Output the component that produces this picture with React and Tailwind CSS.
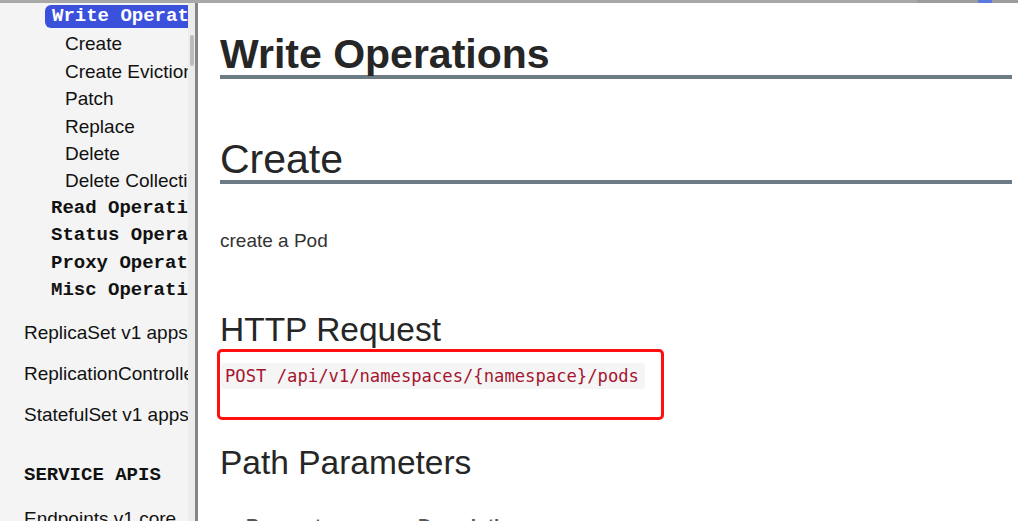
const SANS = "font-['Liberation_Sans','Helvetica',Arial,sans-serif]";
const MONO = "font-['Liberation_Mono','Courier_New',monospace]";

const subItems = ['Create', 'Create Eviction', 'Patch', 'Replace', 'Delete', 'Delete Collection'];
const groups = ['Read Operations', 'Status Operations', 'Proxy Operations', 'Misc Operations'];
const resources = ['ReplicaSet v1 apps', 'ReplicationController v1 core', 'StatefulSet v1 apps'];

function Sidebar() {
  return (
    <aside className="w-[195px] shrink-0 bg-[#f4f4f4] flex">
      <div className="w-[188px] overflow-hidden whitespace-nowrap text-[19px] text-[#111]">
        {/* Active group */}
        <div className="h-[27.4px] flex items-center pl-[45px]">
          <span className={`${MONO} flex-1 h-[23px] flex items-center pl-[7px] rounded-l-[6px] bg-[#3b51dc] text-white font-bold`}>
            Write Operations
          </span>
        </div>
        {subItems.map((s) => (
          <div key={s} className={`${SANS} pl-[65px] leading-[27.4px]`}>{s}</div>
        ))}
        {groups.map((g) => (
          <div key={g} className={`${MONO} pl-[51px] leading-[27.4px] font-bold`}>{g}</div>
        ))}

        <div className="mt-[7.2px]">
          {resources.map((r) => (
            <div key={r} className={`${SANS} pl-[24px] leading-[41px]`}>{r}</div>
          ))}
        </div>

        <div className={`${MONO} mt-[20.8px] pl-[24px] leading-[41px] font-bold`}>SERVICE APIS</div>
        <div className={`${SANS} mt-[1.8px] pl-[24px] leading-[41px]`}>Endpoints v1 core</div>
      </div>
      {/* scrollbar */}
      <div className="w-[7px] bg-[#ececec]">
        <div className="mt-[32px] ml-[2px] h-[31px] w-[4px] rounded-full bg-[#bcbcbc]" />
      </div>
    </aside>
  );
}

function Main() {
  return (
    <main className={`${SANS} flex-1 bg-white pl-[22px] pr-[6px] text-[#262626] overflow-hidden`}>
      <h1 className="mt-[31.3px] text-[41px] leading-none font-bold border-b-4 border-[#6d7c84]">
        Write Operations
      </h1>
      <h1 className="mt-[59.5px] text-[41px] leading-none font-normal border-b-4 border-[#6d7c84]">
        Create
      </h1>
      <p className="mt-[47.3px] text-[19px] leading-[19px] text-[#333]">create a Pod</p>

      <h2 className="mt-[62.7px] text-[33.5px] leading-[33.5px]">HTTP Request</h2>
      <div className="mt-[2.5px] -ml-[3.3px] w-[447px] h-[71px] border-[3px] border-[#ff1010] rounded-[5px] pt-[11.4px] pl-[1.3px]">
        <code className="font-['DejaVu_Sans_Mono',monospace] inline-block text-[17.2px] leading-[26px] bg-[#f5f5f5] rounded-[3px] pl-[4px] pr-[6px] text-[#a5152f]">
          POST /api/v1/namespaces/{'{namespace}'}/pods
        </code>
      </div>

      <h2 className="mt-[25.9px] text-[33.5px] leading-[33.5px]">Path Parameters</h2>

      <div className="mt-[36.5px] flex text-[19px] leading-[19px] font-bold text-[#555]">
        <span className="pl-[26px] w-[198px]">Parameter</span>
        <span>Description</span>
      </div>
    </main>
  );
}

export default function App() {
  return (
    <div className="w-[1018px] h-[521px] overflow-hidden flex flex-col bg-white">
      <div className="h-[3px] shrink-0 flex">
        <div className="flex-1 bg-[#a8a8a8]" />
        <div className="w-[61px] bg-[#9c9c9c]" />
        <div className="w-[14px] bg-[#5b7ae0]" />
        <div className="w-[26px] bg-[#9c9c9c]" />
      </div>
      <div className="flex flex-1 min-h-0">
        <Sidebar />
        <div className="w-[3px] shrink-0 bg-[#858585]" />
        <Main />
      </div>
    </div>
  );
}
